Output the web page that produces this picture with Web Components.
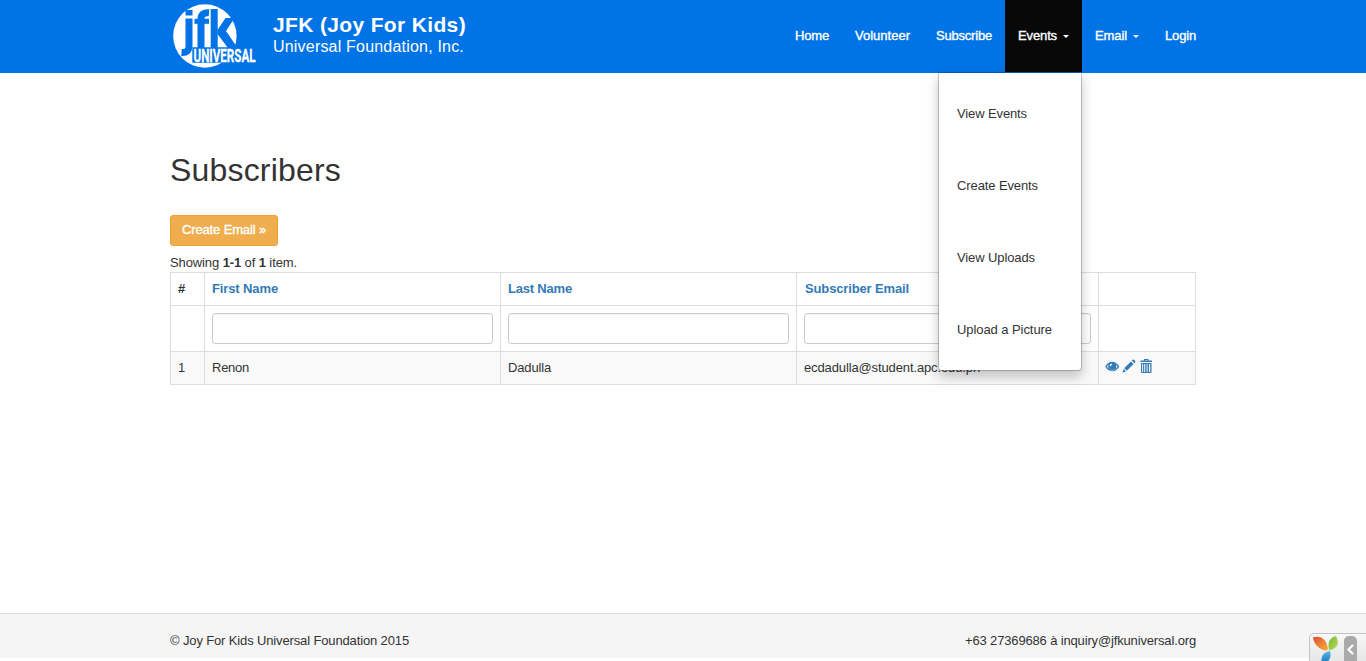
<!DOCTYPE html>
<html lang="en">
<head>
<meta charset="utf-8">
<title>Subscribers</title>
<style>
html,body{margin:0;height:100%}
body{font:13px/18px "Liberation Sans",Arial,sans-serif;color:#333;background:#fff;overflow:hidden}
</style>
</head>
<body>
<jfk-page></jfk-page>
<script>
const define = (name, html, setup) => {
  const t = document.createElement('template');
  t.innerHTML = html;
  customElements.define(name, class extends HTMLElement {
    connectedCallback() {
      if (this.shadowRoot) return;
      this.attachShadow({mode:'open'}).append(t.content.cloneNode(true));
      if (setup) setup(this, this.shadowRoot);
    }
  });
};

/* Text whose letter spacing is tuned so that it fills a given width. */
define('fit-text', `<style>:host{display:inline-block;white-space:nowrap}span{display:inline-block}</style><span><slot></slot></span>`,
  (el, root) => {
    const s = root.querySelector('span'), w = +el.getAttribute('w');
    const n = el.textContent.length;
    el.style.width = w + 'px';
    s.style.letterSpacing = ((w - s.getBoundingClientRect().width) / n) + 'px';
  });

define('jfk-brand', `<style>
:host{display:flex;align-items:flex-start}
svg{display:block;width:90px;height:72px;overflow:visible}
div{padding:13px 0 0 13px;color:#fff}
b,span{display:block}
b{font-size:21px;line-height:24px}
span{font-size:16px;line-height:19px}
</style>
<svg viewBox="170 0 90 72">
<circle cx="204.900" cy="36" r="31.700" fill="#fff"/>
<g fill="none" stroke="#0073e6" stroke-width="7">
<path d="M189 18.500V46Q189 53 181.500 52.500"/><path d="M201 48V19Q201 12.200 209 12.800"/><path d="M214.200 9V48"/><path d="M194.500 21.300H209" stroke-width="5"/></g>
<path d="M185.500 10H192.500V15.500H185.500z" fill="#0073e6"/>
<path d="M217.500 30L225.500 18H234.500L226 31L237.500 48H228L217.500 34z" fill="#0073e6"/>
<path d="M192.300 47.300H256V62.800H192.300z" fill="#0073e6"/>
<text x="193.500" y="61.500" font-family="Roboto, sans-serif" font-size="17.500" font-weight="700" textLength="62" lengthAdjust="spacingAndGlyphs" fill="#fff" stroke="#fff" stroke-width=".3">UNIVERSAL</text>
</svg>
<div><b><fit-text w="193">JFK (Joy For Kids)</fit-text></b><span><fit-text w="191">Universal Foundation, Inc.</fit-text></span></div>`);

define('nav-item', `<style>
:host{display:flex;align-items:center;position:relative;box-sizing:border-box;height:72px;padding:0 13px 1px;color:#fff;-webkit-text-stroke:.35px currentColor}
:host([active]){background:#080808}
i{display:none;margin-left:6px;border:3px solid transparent;border-top-color:#fff;border-bottom:0;margin-top:2px}
:host([caret]) i{display:block}
</style><slot></slot><i></i><slot name="menu"></slot>`);

define('drop-menu', `<style>
:host{position:absolute;z-index:5;top:72px;right:0;width:142px;box-sizing:content-box;padding:5px 0 4px;background:#fff;background-clip:padding-box;border:1px solid rgba(0,0,0,.2);border-radius:0 0 4px 4px;box-shadow:0 6px 12px rgba(0,0,0,.22);color:#333;-webkit-text-stroke:0}
div{height:72px;padding-left:18px;display:flex;align-items:center}
</style>
<div><fit-text w="70">View Events</fit-text></div><div><fit-text w="81">Create Events</fit-text></div>
<div><fit-text w="78">View Uploads</fit-text></div><div><fit-text w="95">Upload a Picture</fit-text></div>`);

define('site-header', `<style>
:host{display:flex;justify-content:space-between;height:73px;padding:0 157px 0 170px;background:#0073e6}
nav{display:flex}
</style><jfk-brand></jfk-brand><nav>
<nav-item><fit-text w="34">Home</fit-text></nav-item>
<nav-item><fit-text w="55">Volunteer</fit-text></nav-item>
<nav-item><fit-text w="56">Subscribe</fit-text></nav-item>
<nav-item active caret><fit-text w="39">Events</fit-text><drop-menu slot="menu"></drop-menu></nav-item>
<nav-item caret><fit-text w="32">Email</fit-text></nav-item>
<nav-item><fit-text w="31">Login</fit-text></nav-item>
</nav>`);

define('action-button', `<style>
:host{display:flex;align-items:center;justify-content:center;box-sizing:border-box;width:108px;height:31px;padding-bottom:1px;background:#f0ad4e;border:1px solid #eea236;border-radius:3px;color:#fff;-webkit-text-stroke:.35px #fff}
</style><slot></slot>`);

define('filter-input', `<style>
:host{display:block;box-sizing:border-box;height:31px;border:1px solid #ccc;border-radius:3px;background:#fff;box-shadow:inset 0 1px 1px rgba(0,0,0,.05)}
</style>`);

define('row-actions', `<style>
:host{display:flex;gap:3px;color:#337ab7;margin-left:-1px}
svg{display:block;width:14px;height:14px;fill:currentColor}
</style>
<svg viewBox="0 0 14 14"><path fill-rule="evenodd" d="M.2 7.600C3.400 1 11 1 14.200 7.600C11 13.800 3.400 13.800 .2 7.600zM1.900 7.600C4.300 12 10.100 12 12.500 7.600Q11.700 6 10.600 5.200A4 4 0 1 1 3.800 5.200Q2.700 6 1.900 7.600zM6.300 4.400Q4.600 5.100 4.800 6.900L6.100 7.300Q5.900 6 7.300 5.400z"/></svg>
<svg viewBox="0 0 14 14"><path d="M.5 13.500L1.500 10L4 12.500zM2.200 9.200L9 2.400L11.600 5L4.800 11.800zM9.800 1.600L10.700.8Q11.400 .2 12 .8L13.200 2Q13.800 2.600 13.200 3.300L12.400 4.200z"/></svg>
<svg viewBox="0 0 14 14"><path fill-rule="evenodd" d="M5 0H9.500V1.500H13V3H1.500V1.500H5zM6 1V1.500H8.500V1zM2 4H12.500V13Q12.500 14 11.500 14H3Q2 14 2 13zM3.100 5V13H4.100V5zM5.200 5V13H6.200V5zM7.600 5V13H8.600V5zM10 5V13H11.200V5z"/></svg>`);

define('subscriber-grid', `<style>
:host{display:grid;grid-template:33px 46px 33px/34px 296px 296px 302px 97px;border:solid #ddd;border-width:1px 0 0 1px}
div{box-sizing:border-box;padding:7px;border:solid #ddd;border-width:0 1px 1px 0;line-height:18px;white-space:nowrap}
.h{font-weight:bold;color:#337ab7}.d{background:#f9f9f9}.e{padding-left:8px}
</style>
<div class="h" style="color:#333">#</div><div class="h"><fit-text w="66">First Name</fit-text></div><div class="h"><fit-text w="64">Last Name</fit-text></div><div class="h e"><fit-text w="104">Subscriber Email</fit-text></div><div></div>
<div></div><div><filter-input></filter-input></div><div><filter-input></filter-input></div><div><filter-input></filter-input></div><div></div>
<div class="d">1</div><div class="d"><fit-text w="37">Renon</fit-text></div><div class="d"><fit-text w="43">Dadulla</fit-text></div><div class="d"><fit-text w="176">ecdadulla@student.apc.edu.ph</fit-text></div><div class="d"><row-actions></row-actions></div>`);

define('debug-badge', `<style>
:host{position:absolute;z-index:6;right:0;bottom:0;display:flex;box-sizing:border-box;width:57px;height:28px;padding:2px 0 0 2px;overflow:hidden;border:solid #c4c4c4;border-width:1px 0 0 1px;border-radius:5px 0 0 0;background:linear-gradient(#f7f7f7,#e6e6e6)}
svg{display:block;flex:none}
</style>
<svg width="54" height="36" viewBox="1312 636 54 36">
<defs><linearGradient id="o" x1="0" y1="0" x2="1" y2="1"><stop stop-color="#dc4b35"/><stop offset="1" stop-color="#f8b13b"/></linearGradient>
<linearGradient id="g" x1="0" y1="0" x2="1" y2="1"><stop stop-color="#6db63f"/><stop offset="1" stop-color="#c4dc50"/></linearGradient>
<linearGradient id="b" x1="0" y1="0" x2="0" y2="1"><stop stop-color="#58b8e8"/><stop offset="1" stop-color="#0864ad"/></linearGradient></defs>
<path fill="url(#o)" d="M1312.800 637.500Q1320 635 1324.500 640Q1327.500 643.500 1328 649.500Q1326 651.200 1323 650Q1315 647 1312.800 637.500z"/>
<path fill="url(#g)" d="M1336 636Q1339.300 643 1336.500 646.500Q1334 649.500 1329.300 650.500Q1328 647 1328.700 643Q1330 637.500 1336 636z"/>
<path fill="url(#b)" d="M1330 651Q1326 651.500 1323.500 654Q1320.500 657.500 1321.500 667Q1328 663 1330 658Q1331 655 1330 651z"/>
<rect x="1344" y="636" width="13" height="30" rx="5" fill="#aaa"/>
<path d="M1353 645L1348.500 649.500L1353 654" fill="none" stroke="#fff" stroke-width="2.200"/>
</svg>`);

define('site-footer', `<style>
:host{display:flex;justify-content:space-between;box-sizing:border-box;height:45px;padding:18px 170px 0;background:#f5f5f5;border-top:1px solid #ddd;margin-bottom:3px}
</style><fit-text w="239">© Joy For Kids Universal Foundation 2015</fit-text><fit-text w="231">+63 27369686 à inquiry@jfkuniversal.org</fit-text>`);

define('jfk-page', `<style>
:host{display:flex;flex-direction:column;height:661px;position:relative}
main{flex:1;padding:77px 170px 0}
h1{margin:0 0 25px;font-size:32px;line-height:40px;font-weight:normal}
.s{margin-top:8px;line-height:18px}
</style><site-header></site-header>
<main><h1><fit-text w="171">Subscribers</fit-text></h1>
<action-button><fit-text w="84">Create Email »</fit-text></action-button>
<div class="s"><fit-text w="127">Showing <b>1-1</b> of <b>1</b> item.</fit-text></div>
<subscriber-grid></subscriber-grid></main>
<site-footer></site-footer><debug-badge></debug-badge>`);
</script>
</body>
</html>
